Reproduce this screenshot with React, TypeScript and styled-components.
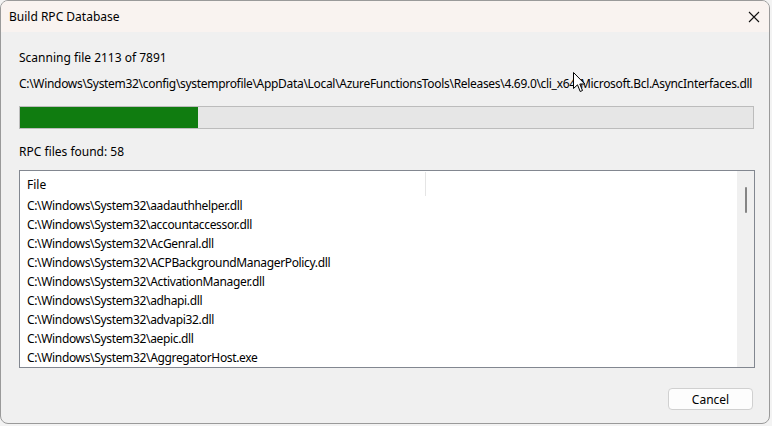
import React from "react";
import styled, { createGlobalStyle } from "styled-components";

const GlobalStyle = createGlobalStyle`
  html, body {
    margin: 0;
    padding: 0;
    background: #f3f3f3;
  }
  body {
    font-family: "Noto Sans", "Liberation Sans", sans-serif;
    font-size: 12px;
    color: #000;
  }
`;

const Window = styled.div`
  position: relative;
  width: 770px;
  height: 424px;
  box-sizing: border-box;
  border: 1px solid #9a9a9a;
  border-radius: 8px;
  background: #f0f0f0;
  overflow: hidden;
  display: flex;
  flex-direction: column;
`;

const TitleBar = styled.div`
  height: 31px;
  flex-shrink: 0;
  background: #f9f3f0;
  display: flex;
  align-items: center;
  justify-content: space-between;
  padding: 0 0 0 8px;
`;

const Title = styled.span`
  font-size: 12px;
  line-height: 16px;
  margin-top: 1px;
`;

const CloseButton = styled.div`
  width: 46px;
  height: 31px;
  display: flex;
  align-items: center;
  justify-content: center;
  margin-right: -8px;
`;

const Body = styled.div`
  flex: 1;
  display: flex;
  flex-direction: column;
  padding: 0 15px 0 18px;
`;

const Label = styled.div<{ $top: number; $path?: boolean }>`
  line-height: 16px;
  margin-top: ${(p) => p.$top}px;
  white-space: nowrap;
  letter-spacing: ${(p) => (p.$path ? "-0.31px" : "0")};
`;

const Progress = styled.div`
  margin-top: 14px;
  height: 23px;
  box-sizing: border-box;
  border: 1px solid #bcbcbc;
  background: #e6e6e6;
  width: 735px;
`;

const Fill = styled.div`
  height: 100%;
  background: #107c10;
`;

const ListBox = styled.div`
  margin-top: 10px;
  width: 736px;
  height: 198px;
  box-sizing: border-box;
  border: 1px solid #828790;
  background: #fff;
  display: flex;
`;

const ListMain = styled.div`
  flex: 1;
  display: flex;
  flex-direction: column;
  padding-top: 1px;
`;

const Header = styled.div`
  height: 24px;
  display: flex;
  align-items: center;
`;

const HeaderCell = styled.div<{ $w: number }>`
  width: ${(p) => p.$w}px;
  height: 100%;
  box-sizing: border-box;
  padding-left: 7px;
  display: flex;
  align-items: center;
  border-right: 1px solid #e5e5e5;
`;

const Row = styled.div`
  height: 19px;
  line-height: 19px;
  padding-left: 7px;
  white-space: nowrap;
  letter-spacing: -0.34px;
`;

const ScrollBar = styled.div`
  width: 17px;
  background: #f0f0f0;
  display: flex;
  justify-content: center;
  padding-top: 16px;
`;

const Thumb = styled.div`
  width: 2px;
  height: 26px;
  border-radius: 1px;
  background: #858585;
`;

const Footer = styled.div`
  display: flex;
  justify-content: flex-end;
  margin-top: 20px;
  padding-right: 1px;
`;

const Button = styled.button`
  width: 85px;
  height: 22px;
  border: 1px solid #d0d0d0;
  border-radius: 4px;
  background: #fdfdfd;
  font-family: inherit;
  font-size: 12px;
  color: #000;
  padding: 0;
`;

const Cursor = styled.svg`
  position: absolute;
  left: 572px;
  top: 71px;
`;

const files = [
  "aadauthhelper.dll",
  "accountaccessor.dll",
  "AcGenral.dll",
  "ACPBackgroundManagerPolicy.dll",
  "ActivationManager.dll",
  "adhapi.dll",
  "advapi32.dll",
  "aepic.dll",
  "AggregatorHost.exe",
];

export default function App() {
  const progress = 24.3;
  return (
    <>
      <GlobalStyle />
      <Window>
        <TitleBar>
          <Title>Build RPC Database</Title>
          <CloseButton>
            <svg width="12" height="12" viewBox="0 0 12 12">
              <path d="M1 1L11 11M11 1L1 11" stroke="#111" strokeWidth="1.1" />
            </svg>
          </CloseButton>
        </TitleBar>
        <Body>
          <Label $top={18}>Scanning file 2113 of 7891</Label>
          <Label $top={10} $path>
            C:\Windows\System32\config\systemprofile\AppData\Local\AzureFunctionsTools\Releases\4.69.0\cli_x64\Microsoft.Bcl.AsyncInterfaces.dll
          </Label>
          <Progress>
            <Fill style={{ width: `${progress}%` }} />
          </Progress>
          <Label $top={15}>RPC files found: 58</Label>
          <ListBox>
            <ListMain>
              <Header>
                <HeaderCell $w={406}>File</HeaderCell>
              </Header>
              {files.map((f) => (
                <Row key={f}>C:\Windows\System32\{f}</Row>
              ))}
            </ListMain>
            <ScrollBar>
              <Thumb />
            </ScrollBar>
          </ListBox>
          <Footer>
            <Button>Cancel</Button>
          </Footer>
        </Body>
        <Cursor width="13" height="21" viewBox="0 0 13 21">
          <path
            d="M0.5 0.5L0.5 16.5L4.5 12.8L7.2 19.5L9.5 18.5L6.8 12L11.8 12Z"
            fill="#fff"
            stroke="#000"
            strokeWidth="1"
          />
        </Cursor>
      </Window>
    </>
  );
}
